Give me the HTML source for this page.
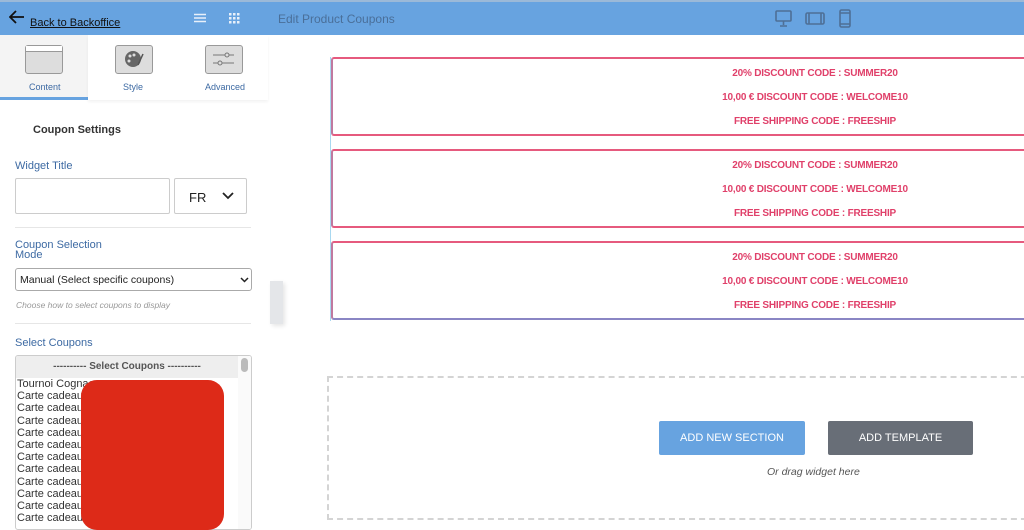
<!DOCTYPE html>
<html><head><meta charset="utf-8"><style>
*{box-sizing:border-box;margin:0;padding:0}
body{width:1024px;height:524px;overflow:hidden;background:#fff;font-family:"Liberation Sans",Arial,sans-serif;position:relative}
.abs{position:absolute}
.top{left:0;top:0;width:1024px;height:35px;background:#67a3e0;border-top:2px solid #9bb9d8}
.lbl{color:#3d6aa3;font-size:11px}
.coupon{position:absolute;left:331px;width:968px;height:79px;border-top:2px solid #e65a7e;border-bottom:2px solid #e65a7e;border-left:2px solid #c0799f;border-right:2px solid #e65a7e;border-radius:3px;text-align:center;color:#e0406a;font-weight:bold;font-size:10px;letter-spacing:-0.2px}
.coupon div{height:24px;line-height:24px}
.item{font-size:11px;color:#333;height:12.2px;line-height:12px}
</style></head><body>
<div class="abs top">
 <svg class="abs" style="left:9px;top:8px" width="16" height="14" viewBox="0 0 16 14"><path d="M15 7H2M7 1L1 7l6 6" stroke="#111" stroke-width="1.8" fill="none"/></svg>
 <div class="abs" style="left:30px;top:15px;font-size:11px;color:#111;text-decoration:underline">Back to Backoffice</div>
 <svg class="abs" style="left:194px;top:11px" width="12" height="10"><path d="M0 1.5h12M0 5h12M0 8.5h12" stroke="#e8f0fa" stroke-width="1.5"/></svg>
 <svg class="abs" style="left:229px;top:11px" width="11" height="11" fill="#e8f0fa"><rect x="0" y="0" width="2.5" height="2.5"/><rect x="4" y="0" width="2.5" height="2.5"/><rect x="8" y="0" width="2.5" height="2.5"/><rect x="0" y="4" width="2.5" height="2.5"/><rect x="4" y="4" width="2.5" height="2.5"/><rect x="8" y="4" width="2.5" height="2.5"/><rect x="0" y="8" width="2.5" height="2.5"/><rect x="4" y="8" width="2.5" height="2.5"/><rect x="8" y="8" width="2.5" height="2.5"/></svg>
 <div class="abs" style="left:278px;top:10px;font-size:12px;color:#4a6f99">Edit Product Coupons</div>
 <svg class="abs" style="left:775px;top:7px" width="80" height="20" fill="none" stroke="#4e6f96" stroke-width="1.6"><rect x="1" y="2" width="15" height="10" rx="1"/><path d="M8.5 12v4M5 17h7"/><rect x="31" y="4" width="18" height="11" rx="1.5"/><path d="M34 4v11M46 4v11"/><rect x="65" y="1" width="10" height="17" rx="1.5"/><path d="M65 4h10M65 15h10"/></svg>
</div>
<div class="abs" style="left:0;top:35px;width:88px;height:65px;background:#f4f4f4;border-bottom:3px solid #67a3e0"></div>
<div class="abs" style="left:88px;top:35px;width:180px;height:65px;background:#fff;box-shadow:0 2px 3px rgba(0,0,0,.05)"></div>
<div class="abs" style="left:25px;top:45px;width:38px;height:29px;border:1.5px solid #999;border-radius:3px;background:#ddd"><div style="height:6px;background:#fff;border-bottom:1px solid #999"></div></div>
<div class="abs" style="left:115px;top:45px;width:38px;height:29px;border:1.5px solid #999;border-radius:3px;background:#ddd"><svg width="35" height="26"><circle cx="17" cy="13" r="8" fill="#666"/><circle cx="14" cy="10" r="1.5" fill="#ddd"/><circle cx="18" cy="9" r="1.5" fill="#ddd"/><circle cx="13" cy="15" r="1.5" fill="#ddd"/><path d="M27 8l-5 11" stroke="#555" stroke-width="1.5"/></svg></div>
<div class="abs" style="left:205px;top:45px;width:38px;height:29px;border:1.5px solid #999;border-radius:3px;background:#ddd"><svg width="35" height="26" stroke="#777" fill="#ddd"><path d="M7 9h21M7 17h21"/><circle cx="21" cy="9" r="2"/><circle cx="14" cy="17" r="2"/></svg></div>
<div class="abs lbl" style="left:29px;top:82px;font-size:9px">Content</div>
<div class="abs lbl" style="left:123px;top:82px;font-size:9px">Style</div>
<div class="abs lbl" style="left:205px;top:82px;font-size:9px">Advanced</div>
<div class="abs" style="left:33px;top:124px;font-size:11px;font-weight:bold;color:#333">Coupon Settings</div>
<div class="abs lbl" style="left:15px;top:160px">Widget Title</div>
<div class="abs" style="left:15px;top:178px;width:155px;height:36px;border:1px solid #ccc;border-radius:2px"></div>
<div class="abs" style="left:174px;top:178px;width:73px;height:36px;border:1px solid #ccc;border-radius:2px;font-size:13px;padding:11px 0 0 14px;color:#222">FR<svg class="abs" style="left:47px;top:13px" width="12" height="8"><path d="M1 1l5 5 5-5" stroke="#222" stroke-width="1.8" fill="none"/></svg></div>
<div class="abs" style="left:15px;top:227px;width:236px;height:1px;background:#e6e6e6"></div>
<div class="abs lbl" style="left:15px;top:240px;line-height:10px">Coupon Selection<br>Mode</div>
<div class="abs" style="left:15px;top:268px;width:237px;height:23px;border:1px solid #aaa;border-radius:3px;font-size:10.5px;padding:5px 4px;color:#222">Manual (Select specific coupons)<svg class="abs" style="left:224px;top:8px" width="9" height="6"><path d="M1 1l3.5 3.5L8 1" stroke="#222" stroke-width="1.5" fill="none"/></svg></div>
<div class="abs" style="left:16px;top:300px;font-size:8.5px;font-style:italic;color:#999">Choose how to select coupons to display</div>
<div class="abs" style="left:15px;top:323px;width:236px;height:1px;background:#e6e6e6"></div>
<div class="abs lbl" style="left:15px;top:337px">Select Coupons</div>
<div class="abs" style="left:270px;top:281px;width:13px;height:43px;background:#e4e6e9;box-shadow:2px 2px 4px rgba(0,0,0,.1)"></div>
<div class="abs" style="left:15px;top:355px;width:237px;height:175px;border:1px solid #ccc;border-radius:3px;overflow:hidden">
 <div style="height:22px;background:#eee;font-size:10px;font-weight:bold;color:#555;text-align:center;line-height:22px;width:222px">---------- Select Coupons ----------</div>
 <div style="padding-left:1px">
 <div class="item">Tournoi Cognac</div><div class="item">Carte cadeau</div><div class="item">Carte cadeau</div><div class="item">Carte cadeau</div><div class="item">Carte cadeau</div><div class="item">Carte cadeau</div><div class="item">Carte cadeau</div><div class="item">Carte cadeau</div><div class="item">Carte cadeau</div><div class="item">Carte cadeau</div><div class="item">Carte cadeau</div><div class="item">Carte cadeau</div></div>
 <div class="abs" style="left:222px;top:0;width:14px;height:175px;background:#fafafa"><div style="margin:2px 3px;width:7px;height:14px;background:#bbb;border-radius:4px"></div></div>
</div>
<div class="abs" style="left:81px;top:380px;width:143px;height:150px;background:#dd2a18;border-radius:16px"></div>
<div class="abs" style="left:330px;top:57px;width:1px;height:264px;background:#a8d8f0"></div>
<div class="coupon" style="top:57px"><div style="margin-top:3px">20% DISCOUNT CODE : SUMMER20</div><div>10,00 € DISCOUNT CODE : WELCOME10</div><div>FREE SHIPPING CODE : FREESHIP</div></div>
<div class="coupon" style="top:149px"><div style="margin-top:3px">20% DISCOUNT CODE : SUMMER20</div><div>10,00 € DISCOUNT CODE : WELCOME10</div><div>FREE SHIPPING CODE : FREESHIP</div></div>
<div class="coupon" style="top:241px;border-bottom-color:#8a86c4"><div style="margin-top:3px">20% DISCOUNT CODE : SUMMER20</div><div>10,00 € DISCOUNT CODE : WELCOME10</div><div>FREE SHIPPING CODE : FREESHIP</div></div>
<div class="abs" style="left:327px;top:376px;width:710px;height:144px;border:2px dashed #d4d4d4"></div>
<div class="abs" style="left:659px;top:421px;width:146px;height:34px;background:#67a3e0;border-radius:2px;color:#fff;font-size:11px;text-align:center;line-height:34px">ADD NEW SECTION</div>
<div class="abs" style="left:828px;top:421px;width:145px;height:34px;background:#686e77;border-radius:2px;color:#fff;font-size:11px;text-align:center;line-height:34px">ADD TEMPLATE</div>
<div class="abs" style="left:767px;top:466px;font-size:10.5px;font-style:italic;color:#555">Or drag widget here</div>
</body></html>
